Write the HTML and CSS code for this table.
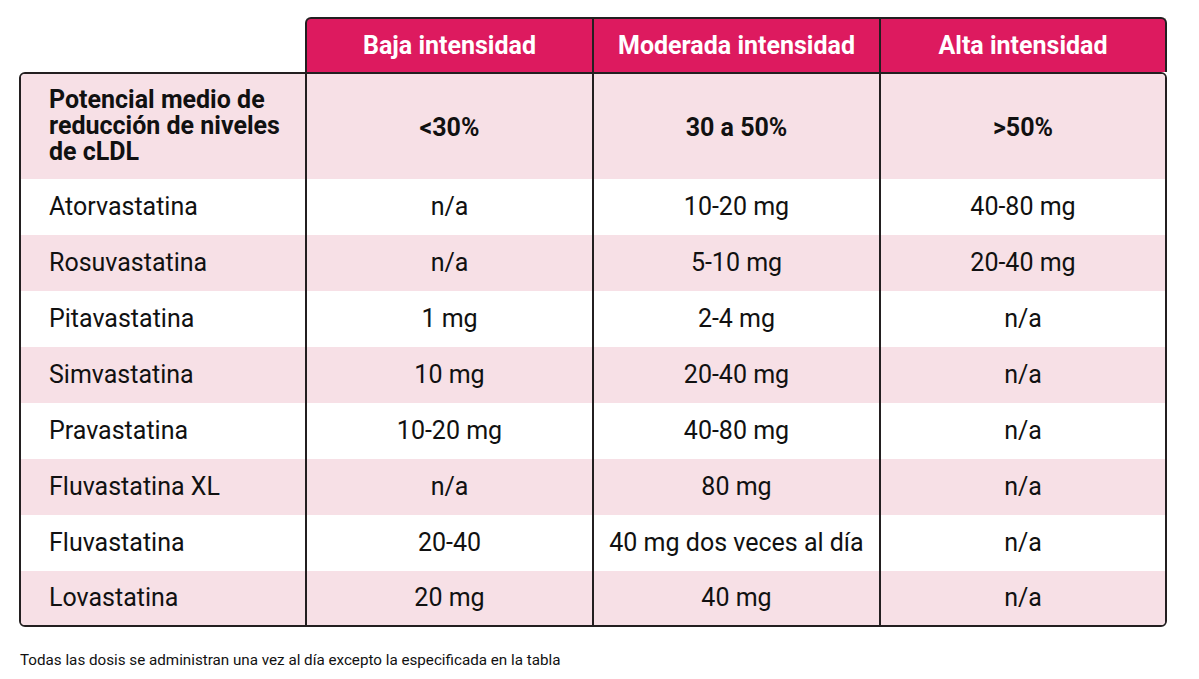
FILE: index.html
```html
<!DOCTYPE html>
<html lang="es">
<head>
<meta charset="utf-8">
<link rel="stylesheet" href="styles.css">
</head>
<body>
<div class="page">
  <div class="head">
    <div class="hc">Baja intensidad</div>
    <div class="hc sep">Moderada intensidad</div>
    <div class="hc sep">Alta intensidad</div>
  </div>
  <div class="body">
    <div class="row first pink">
      <div class="c name bold">Potencial medio de reducción de niveles de cLDL</div>
      <div class="c sep bold">&lt;30%</div>
      <div class="c sep bold">30 a 50%</div>
      <div class="c sep bold">&gt;50%</div>
    </div>
    <div class="row">
      <div class="c name">Atorvastatina</div>
      <div class="c sep">n/a</div>
      <div class="c sep">10-20 mg</div>
      <div class="c sep">40-80 mg</div>
    </div>
    <div class="row pink">
      <div class="c name">Rosuvastatina</div>
      <div class="c sep">n/a</div>
      <div class="c sep">5-10 mg</div>
      <div class="c sep">20-40 mg</div>
    </div>
    <div class="row">
      <div class="c name">Pitavastatina</div>
      <div class="c sep">1 mg</div>
      <div class="c sep">2-4 mg</div>
      <div class="c sep">n/a</div>
    </div>
    <div class="row pink">
      <div class="c name">Simvastatina</div>
      <div class="c sep">10 mg</div>
      <div class="c sep">20-40 mg</div>
      <div class="c sep">n/a</div>
    </div>
    <div class="row">
      <div class="c name">Pravastatina</div>
      <div class="c sep">10-20 mg</div>
      <div class="c sep">40-80 mg</div>
      <div class="c sep">n/a</div>
    </div>
    <div class="row pink">
      <div class="c name">Fluvastatina XL</div>
      <div class="c sep">n/a</div>
      <div class="c sep">80 mg</div>
      <div class="c sep">n/a</div>
    </div>
    <div class="row">
      <div class="c name">Fluvastatina</div>
      <div class="c sep">20-40</div>
      <div class="c sep">40 mg dos veces al día</div>
      <div class="c sep">n/a</div>
    </div>
    <div class="row pink last">
      <div class="c name">Lovastatina</div>
      <div class="c sep">20 mg</div>
      <div class="c sep">40 mg</div>
      <div class="c sep">n/a</div>
    </div>
  </div>
  <p class="note">Todas las dosis se administran una vez al día excepto la especificada en la tabla</p>
</div>
</body>
</html>
```

FILE: styles.css
```css
* { box-sizing: border-box; }
html, body { margin: 0; padding: 0; background: #ffffff; }
body { font-family: Roboto, "Liberation Sans", sans-serif; color: #111111; }

.page { padding: 17px 0 0 19px; width: 1199px; }

.head {
  margin-left: 286px;
  width: 862px;
  height: 55px;
  border: 2px solid #231f20;
  border-bottom: none;
  border-radius: 6px 6px 0 0;
  background: #dd1a5f;
  display: grid;
  grid-template-columns: 285px 287px 286px;
}
.hc {
  display: flex;
  align-items: center;
  justify-content: center;
  color: #ffffff;
  font-weight: 700;
  font-size: 25px;
}
.hc.sep, .c.sep { border-left: 2px solid #231f20; }

.body {
  width: 1148px;
  border: 2px solid #231f20;
  border-radius: 6px;
  overflow: hidden;
}
.row {
  display: grid;
  grid-template-columns: 284px 287px 287px 286px;
  height: 56px;
  background: #ffffff;
}
.row.pink { background: #f7e0e6; }
.row.first { height: 105px; }
.row.last { height: 54px; }

.c {
  display: flex;
  align-items: center;
  justify-content: center;
  font-size: 25px;
  color: #111111;
  padding-bottom: 1px;
}
.c.name { justify-content: flex-start; padding-left: 28px; }
.c.bold { font-weight: 700; }
.row.first .c.sep { padding-top: 1px; padding-bottom: 0; }
.row.first .c.name { line-height: 26px; padding-right: 8px; padding-bottom: 1px; }

.note {
  margin: 24px 0 0 1px;
  font-size: 15.2px;
  color: #111111;
}
```
